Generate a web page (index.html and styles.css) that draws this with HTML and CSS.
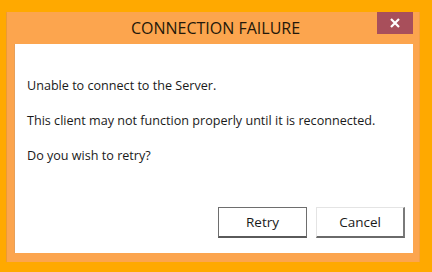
FILE: index.html
```html
<!DOCTYPE html>
<html>
<head>
<meta charset="utf-8">
<link rel="stylesheet" href="styles.css">
</head>
<body>
<div class="window">
  <div class="titlebar">
    <div class="title">CONNECTION FAILURE</div>
    <div class="close">
      <svg width="12" height="12" viewBox="0 0 12 12"><path d="M2 2 L10 10 M10 2 L2 10" stroke="#fff" stroke-width="2.2" stroke-linecap="butt"/></svg>
    </div>
  </div>
  <div class="content">
    <p class="msg">Unable to connect to the Server.</p>
    <p class="msg">This client may not function properly until it is reconnected.</p>
    <p class="msg">Do you wish to retry?</p>
    <div class="buttons">
      <button class="btn default">Retry</button>
      <button class="btn cancel">Cancel</button>
    </div>
  </div>
</div>
</body>
</html>
```
FILE: styles.css
```css
html, body {
  margin: 0;
  padding: 0;
  background: #ffa900;
  width: 432px;
  height: 272px;
  overflow: hidden;
  font-family: "Open Sans", "Noto Sans", sans-serif;
}
.window {
  margin: 12px 0 0 6px;
  width: 414px;
  height: 250px;
  box-sizing: border-box;
  background: #fca54e;
  border-left: 1px solid #eb9a34;
  border-right: 1px solid #f3a040;
  padding: 0 6px 9px 7px;
  display: flex;
  flex-direction: column;
}
.titlebar {
  height: 32px;
  display: flex;
  align-items: flex-start;
  position: relative;
}
.title {
  flex: 1;
  text-align: center;
  font-size: 16px;
  color: #24180a;
  line-height: 20px;
  padding-top: 6px;
  padding-left: 4px;
}
.close {
  position: absolute;
  right: 0;
  top: 0;
  width: 36px;
  height: 22px;
  background: #a84f5b;
  display: flex;
  align-items: center;
  justify-content: center;
}
.content {
  flex: 1;
  background: #fff;
  border-left: 1px solid #e8a05a;
  padding: 0 8px 0 12px;
  display: flex;
  flex-direction: column;
}
.msg {
  margin: 0;
  font-size: 12.6px;
  line-height: 16px;
  color: #1a1a1a;
}
.msg:first-child { margin-top: 34px; }
.msg + .msg { margin-top: 19px; }
.buttons {
  display: flex;
  justify-content: flex-end;
  gap: 9px;
  margin-top: 43px;
}
.btn {
  font-family: "Open Sans", "Noto Sans", sans-serif;
  font-size: 13.5px;
  color: #1a1a1a;
  background: #fff;
  height: 31px;
  box-sizing: border-box;
  padding: 0;
  margin: 0;
}
.default {
  width: 89px;
  border: 1px solid #6e6e6e;
  border-bottom: 2px solid #5a5a5a;
}
.cancel {
  width: 89px;
  border: 1px solid #e4e4e4;
  border-right: 2px solid #7a7a7a;
  border-bottom: 2px solid #6a6a6a;
}
```
